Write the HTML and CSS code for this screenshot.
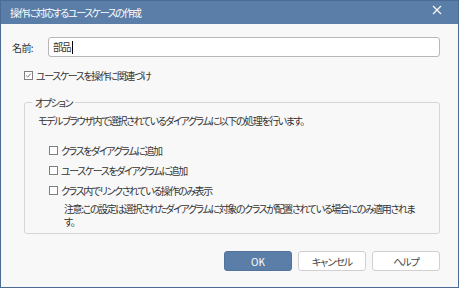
FILE: index.html
```html
<!DOCTYPE html>
<html lang="ja">
<head>
    <meta charset="UTF-8">
    <title>操作に対応するユースケースの作成</title>
    <link rel="stylesheet" href="styles.css">
</head>
<body>
    <div class="dialog">
        <div class="titlebar">
            <span class="title">操作に対応するユースケースの作成</span>
            <svg class="close" width="10" height="10" viewBox="0 0 10 10"><path d="M1 1 L9 9 M9 1 L1 9" stroke="#ffffff" stroke-width="1.1"/></svg>
        </div>
        <div class="content">
            <div class="name-row">
                <label class="name-label">名前:</label>
                <div class="name-input">部品<span class="caret"></span></div>
            </div>
            <div class="check-row top-check">
                <span class="box checked">
                    <svg width="9" height="9" viewBox="0 0 9 9"><path d="M1.5 4.5 L3.5 6.5 L7.5 2" fill="none" stroke="#555" stroke-width="1"/></svg>
                </span>
                <span>ユースケースを操作に関連づけ</span>
            </div>
            <fieldset class="options">
                <legend>オプション</legend>
                <p class="desc">モデルブラウザ内で選択されているダイアグラムに以下の処理を行います。</p>
                <div class="check-row"><span class="box"></span><span>クラスをダイアグラムに追加</span></div>
                <div class="check-row"><span class="box"></span><span>ユースケースをダイアグラムに追加</span></div>
                <div class="check-row"><span class="box"></span><span>クラス内でリンクされている操作のみ表示</span></div>
                <p class="note">注意:この設定は選択されたダイアグラムに対象のクラスが配置されている場合にのみ適用されます。</p>
            </fieldset>
            <div class="buttons">
                <button class="btn primary">OK</button>
                <button class="btn">キャンセル</button>
                <button class="btn">ヘルプ</button>
            </div>
        </div>
    </div>
</body>
</html>
```
FILE: styles.css
```css
* {
    box-sizing: border-box;
}

html, body {
    margin: 0;
    padding: 0;
}

body {
    font-family: "Noto Sans CJK JP", "Noto Sans", sans-serif;
    font-size: 10px;
    font-feature-settings: "palt";
    letter-spacing: -1.4px;
    color: #333333;
    background-color: #f8f8f8;
}

.dialog {
    width: 459px;
    height: 288px;
    border: 1px solid #4a6b93;
    border-top: none;
    background-color: #f8f8f8;
    display: flex;
    flex-direction: column;
}

.titlebar {
    height: 24px;
    background-color: #5a7ea7;
    color: #ffffff;
    display: flex;
    align-items: center;
    justify-content: space-between;
    padding: 0 16px 0 9px;
    border-top: 1px solid #4a6b93;
}

.close {
    display: block;
    margin-top: -5px;
}

.content {
    padding: 13px 18px 0 11px;
    display: flex;
    flex-direction: column;
}

.name-row {
    display: flex;
    align-items: center;
}

.name-label {
    width: 36px;
    letter-spacing: -0.6px;
}

.name-input {
    flex: 1;
    height: 20px;
    background-color: #ffffff;
    border: 1px solid #b8b8b8;
    border-radius: 3px;
    padding: 0 4px;
    line-height: 18px;
    display: flex;
    align-items: center;
}

.caret {
    display: inline-block;
    width: 1px;
    height: 13px;
    background-color: #000000;
    margin-left: 2px;
}

.check-row {
    display: flex;
    align-items: center;
    height: 20px;
}

.top-check {
    margin: 8px 0 0 12px;
}

.box {
    width: 9px;
    height: 9px;
    border: 1px solid #808080;
    background-color: #ffffff;
    margin-right: 3px;
    display: inline-flex;
    align-items: center;
    justify-content: center;
}

.box svg {
    display: block;
}

.options {
    margin: 10px 0 0 12px;
    padding: 3px 10px 6px 13px;
    border: 1px solid #d6d6d6;
    border-radius: 3px;
    height: 139px;
}

.options legend {
    padding: 0 3px;
    margin-left: -6px;
}

.desc {
    margin: 0 0 11px 0;
    line-height: 16px;
}

.options .check-row {
    margin-left: 11px;
}

.note {
    margin: 2px 0 0 26px;
    width: 358px;
    line-height: 13px;
}

.buttons {
    display: flex;
    justify-content: flex-end;
    gap: 6px;
    margin-top: 17px;
}

.btn {
    width: 68px;
    height: 20px;
    font-family: inherit;
    font-size: 10px;
    font-feature-settings: "palt";
    letter-spacing: -1px;
    color: #444444;
    background-color: #ffffff;
    border: 1px solid #d0d0d0;
    border-radius: 3px;
    padding: 0;
}

.btn.primary {
    background-color: #5a7ea7;
    border-color: #52749b;
    color: #ffffff;
    letter-spacing: 0;
}
```
